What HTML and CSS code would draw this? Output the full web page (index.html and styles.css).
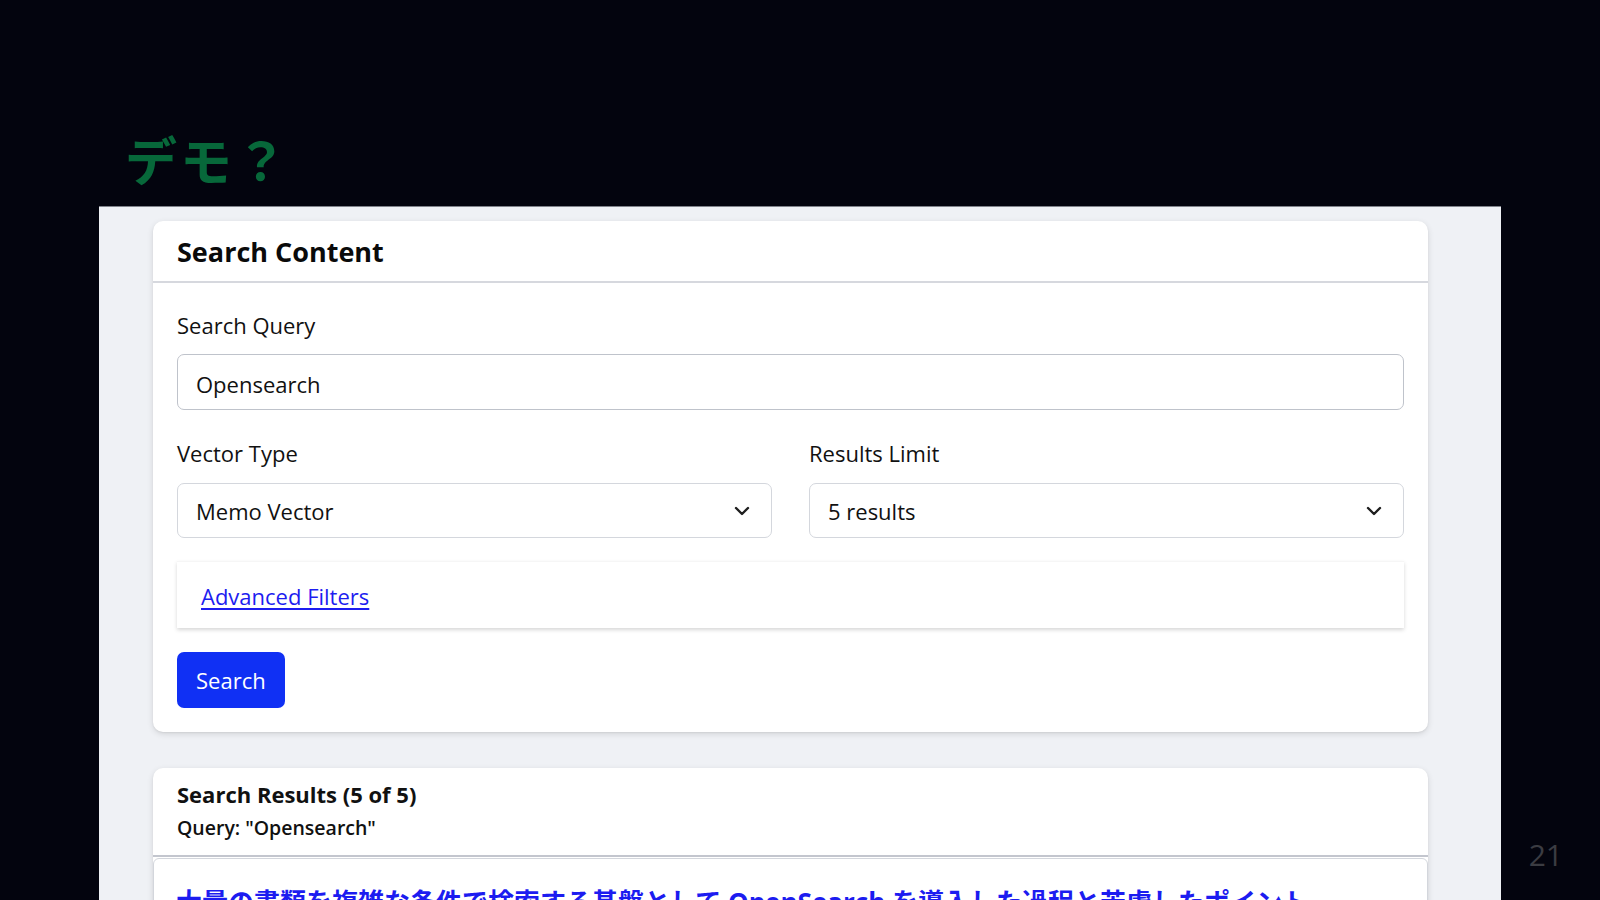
FILE: index.html
```html
<!DOCTYPE html>
<html lang="ja">

<head>
    <meta charset="UTF-8">
    <meta name="viewport" content="width=device-width, initial-scale=1.0">
    <title>デモ？</title>
    <link rel="stylesheet" href="styles.css">
</head>

<body>

    <div class="slide">
        <h1 class="slide-title">デモ？</h1>

        <div class="demo-frame">
            <div class="card">
                <div class="card-header">
                    <h2>Search Content</h2>
                </div>
                <form class="card-body" id="searchForm">
                    <div class="form-group">
                        <label for="query">Search Query</label>
                        <input type="text" id="query" name="query" value="Opensearch">
                    </div>

                    <div class="form-row">
                        <div class="form-group">
                            <label for="vectorType">Vector Type</label>
                            <div class="select-wrap">
                                <select id="vectorType" name="vectorType">
                                    <option>Memo Vector</option>
                                    <option>Title Vector</option>
                                </select>
                                <svg class="chevron" width="16" height="10" viewBox="0 0 16 10"><path d="M2 2 L8 8 L14 2" fill="none" stroke="#1f1f1f" stroke-width="2.4" stroke-linecap="round" stroke-linejoin="round"/></svg>
                            </div>
                        </div>
                        <div class="form-group">
                            <label for="limit">Results Limit</label>
                            <div class="select-wrap">
                                <select id="limit" name="limit">
                                    <option>5 results</option>
                                    <option>10 results</option>
                                </select>
                                <svg class="chevron" width="16" height="10" viewBox="0 0 16 10"><path d="M2 2 L8 8 L14 2" fill="none" stroke="#1f1f1f" stroke-width="2.4" stroke-linecap="round" stroke-linejoin="round"/></svg>
                            </div>
                        </div>
                    </div>

                    <div class="filters">
                        <a href="#">Advanced Filters</a>
                    </div>

                    <button type="submit" class="search-button">Search</button>
                </form>
            </div>

            <div class="card results">
                <div class="results-header">
                    <h3>Search Results (5 of 5)</h3>
                    <p>Query: "Opensearch"</p>
                </div>
                <div class="result-item">
                    <a href="#" class="result-title">大量の書類を複雑な条件で検索する基盤として OpenSearch を導入した過程と苦慮したポイント</a>
                </div>
            </div>
        </div>

        <div class="page-number">21</div>
    </div>

</body>

</html>
```

FILE: styles.css
```css
body {
    margin: 0;
    height: 900px;
    overflow: hidden;
    background-color: #03040e;
    font-family: "Open Sans", "Noto Sans CJK JP", sans-serif;
    color: #111;
}

.slide {
    position: relative;
    height: 900px;
}

.slide-title {
    margin: 0;
    padding: 133px 0 0 125px;
    height: 52px;
    line-height: 52px;
    font-family: "Noto Sans CJK JP", sans-serif;
    font-size: 52px;
    font-weight: 700;
    letter-spacing: 3px;
    color: #07683a;
}

.demo-frame {
    margin: 21px 0 0 99px;
    width: 1402px;
    height: 700px;
    box-sizing: border-box;
    padding: 14px 73px 0 54px;
    background-color: #eff1f5;
    border-top: 1px solid #80838b;
}

.card {
    background-color: #fff;
    border-radius: 10px;
    box-shadow: 0 2px 6px rgba(0, 0, 0, 0.12), 0 1px 2px rgba(0, 0, 0, 0.06);
}

.card-header {
    padding: 0 24px;
    height: 60px;
    border-bottom: 2px solid #d6d8de;
    display: flex;
    align-items: center;
}

.card-header h2 {
    margin: 0;
    font-size: 27px;
    font-weight: 700;
    color: #0a0a0a;
}

.card-body {
    padding: 26px 24px 24px;
}

.form-group label {
    display: block;
    font-size: 22px;
    line-height: 33px;
    margin-bottom: 12px;
    color: #111;
}

.form-row {
    display: grid;
    grid-template-columns: 1fr 1fr;
    gap: 37px;
    margin-top: 27px;
}

.form-row label {
    margin-bottom: 13px;
}

input,
select {
    width: 100%;
    box-sizing: border-box;
    font-family: inherit;
    font-size: 22px;
    color: #111;
    background-color: #fff;
    border-radius: 7px;
    padding: 0 18px;
    outline: none;
}

input {
    height: 56px;
    padding-top: 3px;
    border: 1.5px solid #bfc3cb;
}

select {
    height: 55px;
    border: 1.5px solid #d4d7dd;
    appearance: none;
    -webkit-appearance: none;
}

.select-wrap {
    position: relative;
}

.chevron {
    position: absolute;
    right: 22px;
    top: 23px;
    pointer-events: none;
}

.filters {
    margin-top: 23px;
    padding: 18px 24px 15px;
    background-color: #fff;
    box-shadow: 0 2px 4px rgba(0, 0, 0, 0.16);
    border-top: 1px solid #f6f6f6;
}

.filters a {
    font-size: 22px;
    line-height: 33px;
    color: #1d1df0;
    text-decoration: underline;
    text-underline-offset: 3px;
}

.search-button {
    margin-top: 24px;
    height: 56px;
    padding: 0 19px;
    border: none;
    border-radius: 7px;
    background-color: #1030f4;
    color: #fff;
    font-family: inherit;
    font-size: 22px;
    cursor: pointer;
}

.results {
    margin-top: 36px;
    border-radius: 10px 10px 0 0;
}

.results-header {
    padding: 9px 24px 11px;
    border-bottom: 2px solid #c3c6ce;
}

.results-header h3 {
    margin: 0;
    font-size: 22px;
    line-height: 34px;
    font-weight: 700;
}

.results-header p {
    margin: 0;
    font-size: 19.5px;
    line-height: 33px;
    font-weight: 600;
}

.result-item {
    margin-top: 1px;
    padding: 24px 22px;
    border: 1px solid #d3d6dc;
    border-radius: 6px 6px 0 0;
}

.result-title {
    font-family: "Open Sans", "Noto Sans CJK JP", sans-serif;
    font-size: 26px;
    line-height: 39px;
    font-weight: 700;
    color: #1c1cf0;
    text-decoration: none;
}

.page-number {
    position: absolute;
    right: 37px;
    bottom: 25px;
    font-size: 30px;
    color: #3b3c42;
}
```
